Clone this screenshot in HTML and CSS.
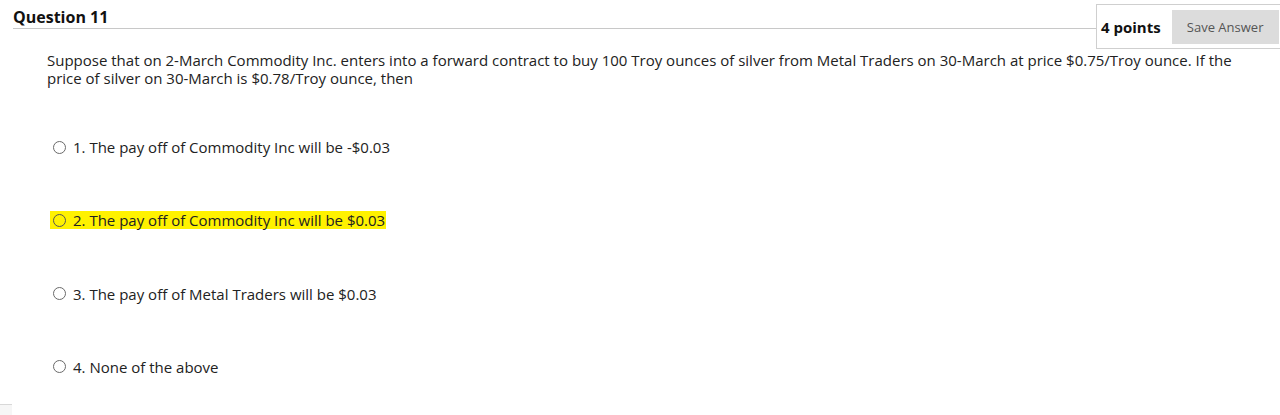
FILE: index.html
```html
<!DOCTYPE html>
<html>
<head>
<meta charset="utf-8">
<link rel="stylesheet" href="styles.css">
</head>
<body>
<div class="page">
  <div class="header">
    <div class="title-wrap"><h2 class="title">Question 11</h2></div>
    <div class="points-box">
      <span class="points">4 points</span>
      <span class="save-btn">Save Answer</span>
    </div>
  </div>
  <p class="question">Suppose that on 2-March Commodity Inc. enters into a forward contract to buy 100 Troy ounces of silver from Metal Traders on 30-March at price $0.75/Troy ounce. If the price of silver on 30-March is $0.78/Troy ounce, then</p>
  <ul class="options">
    <li class="option"><span class="radio"></span><span class="label">1. The pay off of Commodity Inc will be -$0.03</span></li>
    <li class="option"><span class="hl"><span class="radio radio-dark"></span><span class="label">2. The pay off of Commodity Inc will be $0.03</span></span></li>
    <li class="option"><span class="radio"></span><span class="label">3. The pay off of Metal Traders will be $0.03</span></li>
    <li class="option"><span class="radio"></span><span class="label">4. None of the above</span></li>
  </ul>
  <div class="footer-mark"></div>
</div>
</body>
</html>
```
FILE: styles.css
```css
html, body {
  margin: 0;
  padding: 0;
  background: #ffffff;
}
body {
  font-family: "Open Sans", "Noto Sans", sans-serif;
  color: #222;
  width: 1280px;
  height: 415px;
  overflow: hidden;
}
.page {
  position: relative;
  height: 415px;
}
.header {
  display: flex;
  align-items: flex-start;
  padding-left: 13px;
}
.title-wrap {
  flex: 1;
  height: 29px;
  border-bottom: 1px solid #c8c8c8;
  box-sizing: border-box;
}
.title {
  margin: 0;
  padding-top: 6px;
  font-size: 16px;
  line-height: 22px;
  font-weight: 700;
  color: #111;
}
.points-box {
  margin-top: 4px;
  height: 45px;
  width: 200px;
  box-sizing: border-box;
  border: 1px solid #cfcfcf;
  border-right: none;
  display: flex;
  align-items: center;
  padding-left: 4px;
  margin-right: -16px;
  margin-left: -1px;
}
.points {
  font-size: 15px;
  font-weight: 700;
  color: #111;
  margin-right: 11px;
  line-height: 20px;
}
.save-btn {
  background: #dcdcdc;
  height: 34px;
  width: 107px;
  display: flex;
  align-items: center;
  justify-content: center;
  font-size: 13px;
  color: #555;
}
.question {
  margin: 2px 0 0 47px;
  width: 1205px;
  font-size: 15px;
  line-height: 18px;
  color: #222;
}
.options {
  list-style: none;
  margin: 50px 0 0 0;
  padding: 0 0 0 50px;
  display: flex;
  flex-direction: column;
  gap: 53.3px;
}
.option {
  height: 20px;
  display: flex;
  align-items: center;
  font-size: 15px;
  line-height: 20px;
  padding-left: 3px;
}
.hl {
  display: flex;
  align-items: center;
  background: #fff200;
  height: 18px;
  margin-left: -3px;
  padding: 0 1px 0 3px;
}
.radio {
  width: 13px;
  height: 13px;
  box-sizing: border-box;
  border: 1px solid #6a6a6a;
  border-radius: 50%;
  margin-right: 7px;
  flex: none;
}
.radio-dark {
  border-color: #555;
}
.label {
  white-space: nowrap;
}
.footer-mark {
  position: absolute;
  left: 0;
  top: 404px;
  width: 12px;
  height: 11px;
  border-top: 1px solid #d8d8d8;
  background: #f6f6f6;
}
```
